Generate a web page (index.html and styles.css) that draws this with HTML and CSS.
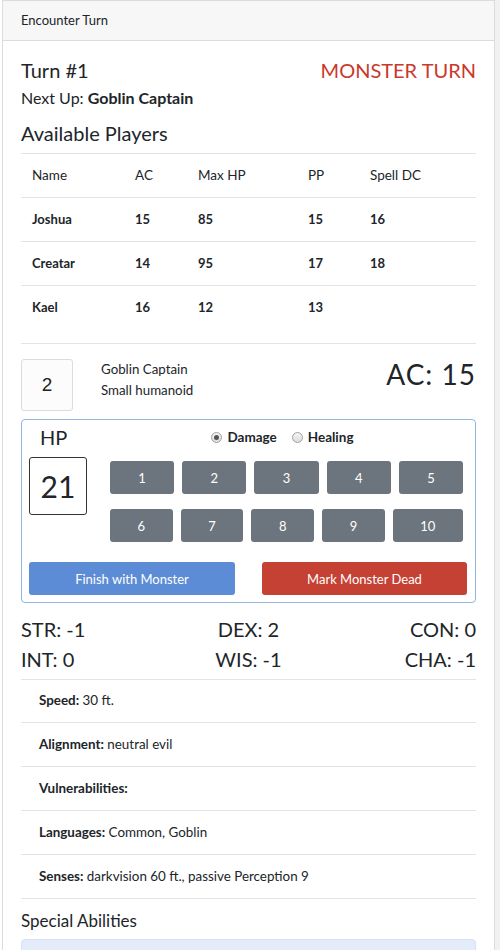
FILE: index.html
```html
<!DOCTYPE html>
<html>
<head>
<meta charset="utf-8">
<link rel="stylesheet" href="styles.css">
</head>
<body>
<div class="page">
  <div class="card">
    <div class="card-header">Encounter Turn</div>
    <div class="card-body">
      <div class="turn-row">
        <div class="turn-title">Turn #1</div>
        <div class="turn-who">MONSTER TURN</div>
      </div>
      <div class="next-up">Next Up: <b>Goblin Captain</b></div>
      <div class="section-title">Available Players</div>
      <table class="players">
        <colgroup>
          <col class="c1"><col class="c2"><col class="c3"><col class="c4"><col class="c5">
        </colgroup>
        <thead>
          <tr><th>Name</th><th>AC</th><th>Max HP</th><th>PP</th><th>Spell DC</th></tr>
        </thead>
        <tbody>
          <tr><td class="name">Joshua</td><td>15</td><td>85</td><td>15</td><td>16</td></tr>
          <tr><td class="name">Creatar</td><td>14</td><td>95</td><td>17</td><td>18</td></tr>
          <tr><td class="name">Kael</td><td>16</td><td>12</td><td>13</td><td></td></tr>
        </tbody>
      </table>
      <hr class="rule">
      <div class="monster-row">
        <div class="init-box">2</div>
        <div class="monster-info">
          <div>Goblin Captain</div>
          <div>Small humanoid</div>
        </div>
        <div class="monster-ac">AC: 15</div>
      </div>
      <div class="hp-panel">
        <div class="hp-top">
          <div class="hp-left">
            <div class="hp-label">HP</div>
            <div class="hp-box">21</div>
          </div>
          <div class="hp-right">
            <div class="radios">
              <span class="radio checked"></span><span class="radio-label">Damage</span>
              <span class="radio"></span><span class="radio-label">Healing</span>
            </div>
            <div class="btn-row">
              <span class="num-btn">1</span><span class="num-btn">2</span><span class="num-btn">3</span><span class="num-btn">4</span><span class="num-btn">5</span>
            </div>
            <div class="btn-row">
              <span class="num-btn">6</span><span class="num-btn">7</span><span class="num-btn">8</span><span class="num-btn">9</span><span class="num-btn">10</span>
            </div>
          </div>
        </div>
        <div class="hp-actions">
          <span class="action-btn finish">Finish with Monster</span>
          <span class="action-btn dead">Mark Monster Dead</span>
        </div>
      </div>
      <div class="stats">
        <div class="stat left">STR: -1</div>
        <div class="stat mid">DEX: 2</div>
        <div class="stat right">CON: 0</div>
        <div class="stat left">INT: 0</div>
        <div class="stat mid">WIS: -1</div>
        <div class="stat right">CHA: -1</div>
      </div>
      <ul class="details">
        <li><b>Speed:</b> 30 ft.</li>
        <li><b>Alignment:</b> neutral evil</li>
        <li><b>Vulnerabilities:</b></li>
        <li><b>Languages:</b> Common, Goblin</li>
        <li><b>Senses:</b> darkvision 60 ft., passive Perception 9</li>
      </ul>
      <div class="abilities-title">Special Abilities</div>
      <div class="alert"></div>
    </div>
  </div>
</div>
</body>
</html>
```
FILE: styles.css
```css
html, body {
  margin: 0;
  padding: 0;
  background: #fff;
}
body {
  font-family: "Lato", "Liberation Sans", sans-serif;
  color: #212529;
  overflow: hidden;
}
.page {
  padding-left: 2px;
  border-right: 5px solid #f1f1f1;
  min-height: 950px;
  box-sizing: border-box;
}
.card {
  border: 1px solid #dcdcdc;
  border-bottom: none;
}
.card-header {
  background: #f7f7f7;
  border-bottom: 1px solid #dcdcdc;
  padding: 12px 18px;
  font-size: 13px;
  line-height: 15px;
}
.card-body {
  padding: 17px 18px 0 18px;
}
.turn-row {
  display: flex;
  justify-content: space-between;
  align-items: baseline;
  font-size: 20px;
  line-height: 24px;
}
.turn-who {
  color: #c9392d;
}
.next-up {
  margin-top: 4px;
  font-size: 16px;
  line-height: 24px;
}
.section-title {
  margin-top: 11px;
  font-size: 20px;
  line-height: 24px;
}
.players {
  margin-top: 8px;
  width: 100%;
  border-collapse: collapse;
  table-layout: fixed;
  font-size: 13px;
}
.players .c1 { width: 103px; }
.players .c2 { width: 63px; }
.players .c3 { width: 110px; }
.players .c4 { width: 62px; }
.players th, .players td {
  text-align: left;
  padding: 12px 11px;
  line-height: 19px;
  border-top: 1px solid #e3e3e3;
}
.players th {
  font-weight: normal;
  font-size: 13.5px;
  border-bottom: 1px solid #e3e3e3;
}
.players td {
  font-weight: bold;
}
.players tbody tr:first-child td {
  border-top: none;
}
.rule {
  margin: 14px 0 15px 0;
  border: none;
  border-top: 1px solid #e3e3e3;
  height: 0;
}
.monster-row {
  display: flex;
  align-items: flex-start;
}
.init-box {
  width: 50px;
  height: 50px;
  border: 1px solid #dcdcdc;
  border-radius: 3px;
  background: #fcfcfd;
  display: flex;
  align-items: center;
  justify-content: center;
  font-size: 19px;
  font-weight: bold;
  font-family: "Liberation Sans", sans-serif;
  color: #222;
}
.init-box {
  font-weight: normal;
}
.monster-info {
  margin-left: 28px;
  font-size: 13.3px;
  line-height: 21px;
  flex: 1;
}
.monster-ac {
  font-size: 28px;
  line-height: 30px;
  letter-spacing: 1px;
}
.hp-panel {
  margin-top: 8px;
  border: 1px solid #94b4e2;
  border-radius: 4px;
  padding: 5px 8px 7px 7px;
}
.hp-top {
  display: flex;
  gap: 23px;
}
.hp-left {
  width: 58px;
}
.hp-label {
  font-size: 20px;
  line-height: 24px;
  padding-left: 11px;
}
.hp-box {
  margin-top: 8px;
  width: 56px;
  height: 56px;
  border: 1px solid #333;
  border-radius: 3px;
  display: flex;
  align-items: center;
  justify-content: center;
  font-size: 30px;
}
.hp-right {
  flex: 1;
  padding-right: 4px;
}
.radios {
  margin-top: 2px;
  display: flex;
  justify-content: center;
  align-items: center;
  font-size: 13.5px;
  line-height: 20px;
  font-weight: bold;
  padding-right: 8px;
}
.radio {
  width: 9px;
  height: 9px;
  border: 1px solid #a0a0a0;
  border-radius: 50%;
  background: linear-gradient(#f4f4f4, #dcdcdc);
  margin-right: 5px;
  position: relative;
}
.radio.checked::after {
  content: "";
  position: absolute;
  left: 2px;
  top: 2px;
  width: 5px;
  height: 5px;
  border-radius: 50%;
  background: #555;
}
.radio-label {
  margin-right: 15px;
}
.radio-label:last-child {
  margin-right: 0;
}
.btn-row {
  display: flex;
  gap: 8px;
  margin-top: 14px;
}
.btn-row + .btn-row {
  margin-top: 15px;
}
.num-btn {
  flex: 1 1 auto;
  background: #6c757d;
  color: #fff;
  border-radius: 3px;
  height: 33px;
  display: flex;
  align-items: center;
  justify-content: center;
  font-size: 13px;
  padding: 0 20px;
}
.hp-actions {
  display: grid;
  grid-template-columns: 206px 205px;
  column-gap: 27px;
  margin-top: 20px;
}
.action-btn {
  height: 33px;
  border-radius: 3px;
  color: #fff;
  display: flex;
  align-items: center;
  justify-content: center;
  font-size: 13px;
}
.finish {
  background: #5d8cd6;
}
.dead {
  background: #c54133;
}
.stats {
  display: grid;
  grid-template-columns: 1fr 1fr 1fr;
  margin-top: 11px;
  font-size: 20px;
  line-height: 30px;
}
.stat.mid { text-align: center; }
.stat.right { text-align: right; }
.details {
  list-style: none;
  margin: 5px 0 0 0;
  padding: 0;
  font-size: 13.4px;
}
.details li {
  border-top: 1px solid #e3e3e3;
  padding: 12px 18px;
  line-height: 19px;
}
.details li:first-child {
  padding-top: 11px;
}
.details li:last-child {
  border-bottom: 1px solid #e3e3e3;
}
.abilities-title {
  margin-top: 12px;
  font-size: 17px;
  line-height: 20px;
}
.alert {
  margin-top: 8px;
  height: 60px;
  background: #e3ecf8;
  border: 1px solid #d6e2f4;
  border-radius: 4px;
}
```
